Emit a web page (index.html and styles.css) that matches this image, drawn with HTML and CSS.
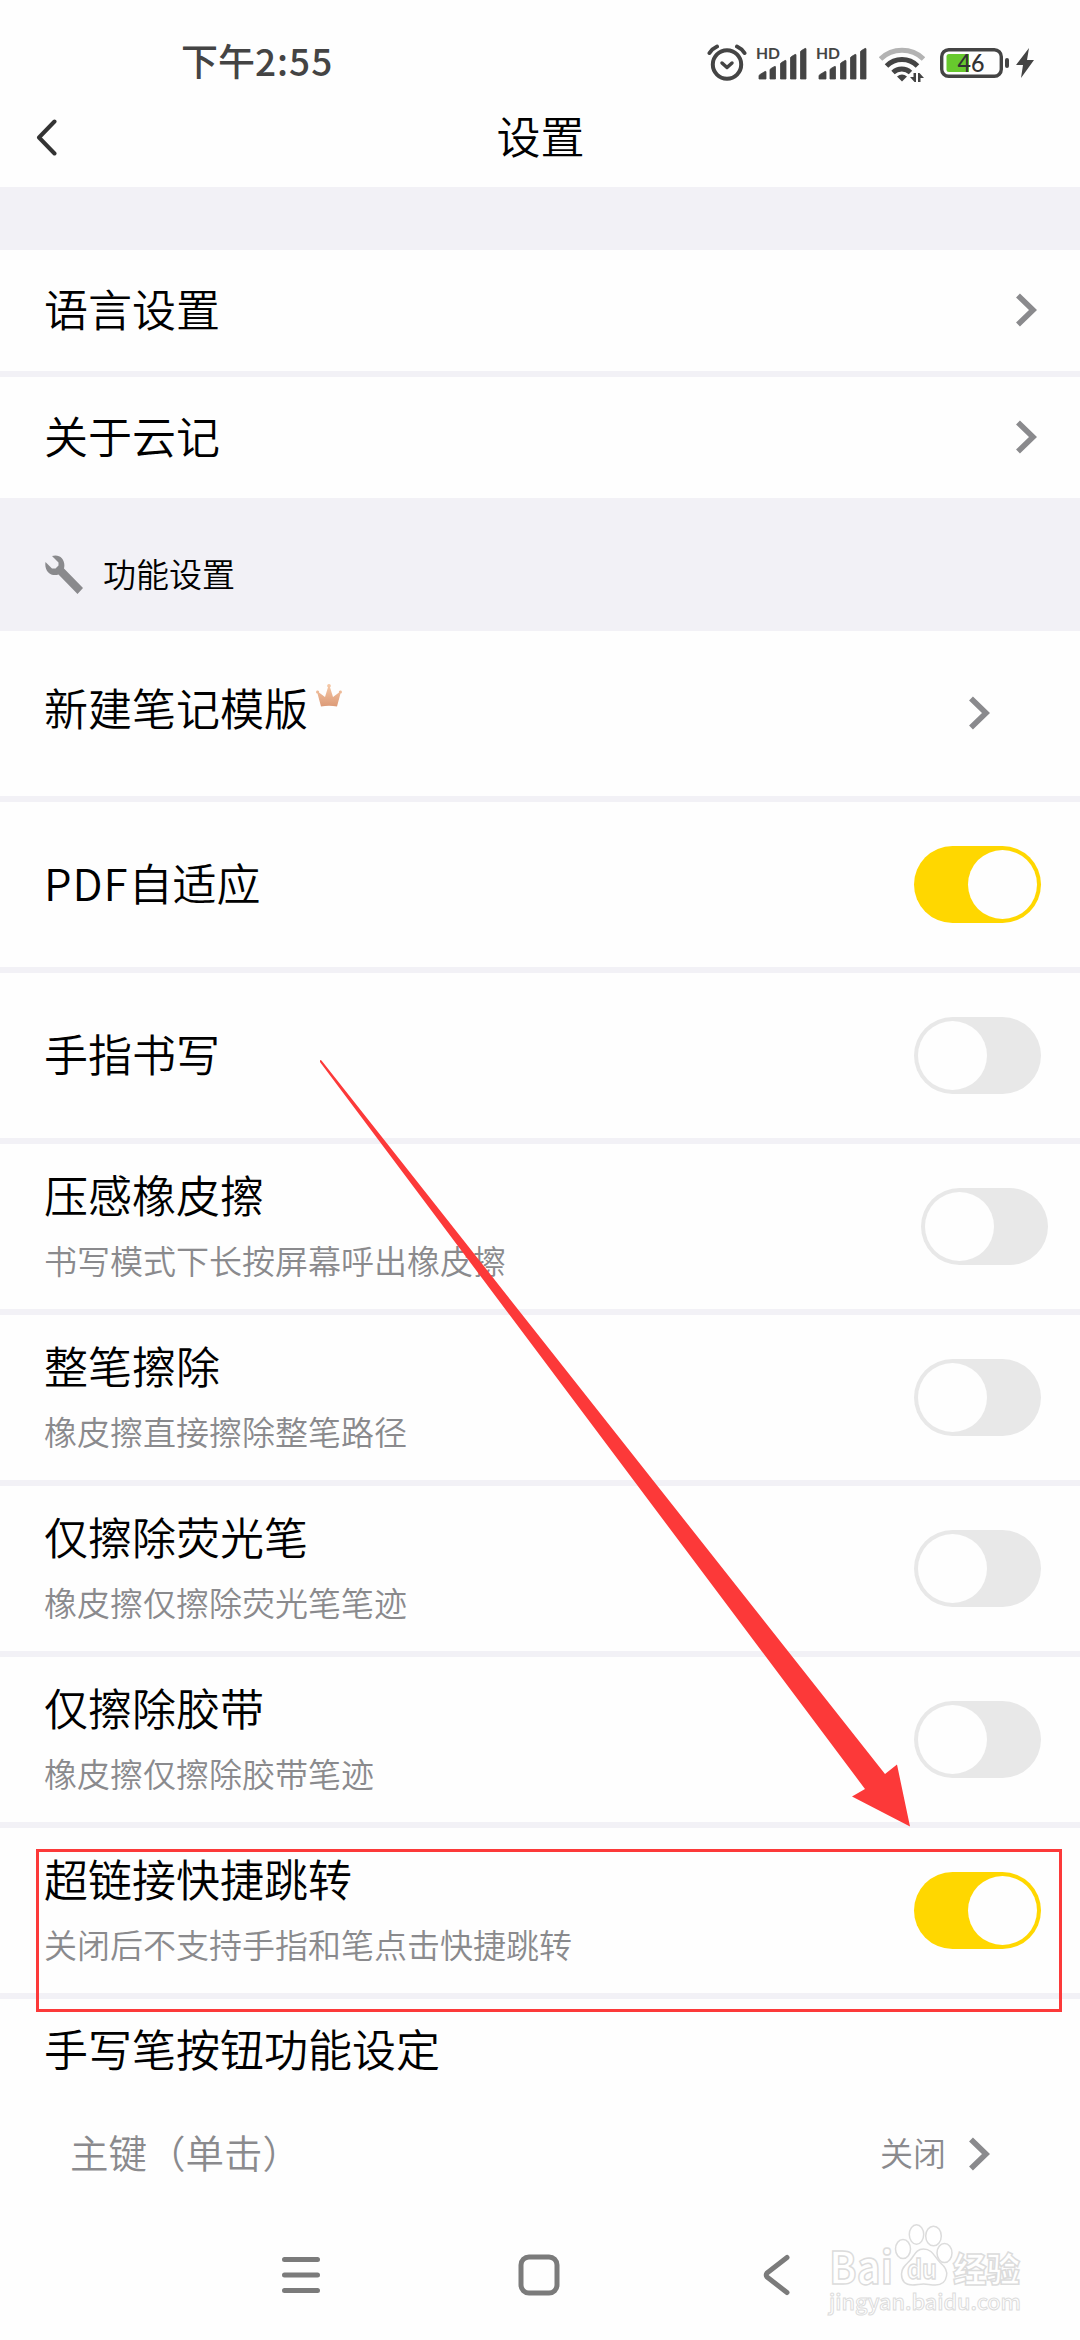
FILE: index.html
```html
<!DOCTYPE html>
<html lang="zh-CN">
  <head>
    <meta charset="UTF-8" />
    <meta name="viewport" content="width=device-width, initial-scale=1.0" />
    <title>设置</title>
    <link rel="stylesheet" href="styles.css">
  </head>
  <body>
    <!-- 公用图标 -->
    <svg class="defs" width="0" height="0">
      <symbol id="arrow" viewBox="0 0 21 34">
        <path d="M2 2.5 L17 17 L2 31.5" fill="none" stroke="#8a8a8d" stroke-width="5.6" />
      </symbol>
      <symbol id="bars" viewBox="0 0 50 34">
        <path d="M2 33v-3q0-1 1-1.500l5-3q1-.5 1 .5v7h-6zM13 33v-9q0-1 1-1.500l3.500-2q1-.5 1 .5v12zM23.500 33v-15q0-1 1-1.500l3.500-2q1-.5 1 .5v18zM33.500 33v-21q0-1 1-1.500l3.500-2q1-.5 1 .5v24zM43.500 33v-27q0-1 1-1.500l3.500-2q1-.5 1 .5v30z" fill="#444" stroke="#444" stroke-width=".8" />
      </symbol>
    </svg>

    <div class="status">
      <span class="time">下午<span class="num">2:55</span></span>
      <div class="status-icons">
        <svg class="alarm" viewBox="0 0 40 38">
          <g fill="none" stroke="#444" stroke-width="4" stroke-linecap="round">
            <circle cx="20" cy="20.500" r="14.200" />
            <path d="M2.500 9 Q5.500 4.500 10 2.500M37.500 9 Q34.500 4.500 30 2.500" />
            <path d="M15 19l5 4.500 5-4.500" stroke-width="3.500" stroke-linejoin="round" />
          </g>
        </svg>
        <svg class="signal" viewBox="0 0 50 34">
          <use href="#bars" />
          <text class="hd" x="-1" y="12.500" textLength="24" lengthAdjust="spacingAndGlyphs">HD</text>
        </svg>
        <svg class="signal" viewBox="0 0 50 34">
          <use href="#bars" />
          <text class="hd" x="-1" y="12.500" textLength="24" lengthAdjust="spacingAndGlyphs">HD</text>
        </svg>
        <svg class="wifi" viewBox="0 0 46 35">
          <g fill="none" stroke-width="5">
            <path d="M1.500 12 A31 31 0 0 1 44.500 12" stroke="#b3b3b3" />
            <path d="M7.500 19 A22 22 0 0 1 38.500 19" stroke="#444" />
            <path d="M14 25.500 A13 13 0 0 1 31.500 25.500" stroke="#444" />
          </g>
          <path d="M18 29.500 Q23 25.500 28 29.500 L23 34.500z" fill="#444" />
          <path d="M31 30h3.500v-4h2.500v9h-1.500zM39 35v-9h1.500l4.500 5h-3.500v4z" fill="#444" />
        </svg>
        <svg class="battery" viewBox="0 0 70 30">
          <rect x="1.700" y="1.700" width="59.600" height="26.600" rx="7" fill="none" stroke="#444" stroke-width="3.400" />
          <rect x="65" y="10" width="4" height="10" rx="2" fill="#444" />
          <path d="M9 6h20v18h-20q-2.500 0-2.500-2.500v-13q0-2.500 2.500-2.500z" fill="#67c92d" />
          <text class="level" x="17.500" y="24" textLength="27" lengthAdjust="spacingAndGlyphs">46</text>
        </svg>
        <svg class="bolt" viewBox="0 0 18 30">
          <path d="M13 0 L0 17h7L5 30 18 12h-7z" fill="#444" />
        </svg>
      </div>
    </div>

    <div class="header">
      <svg class="back" viewBox="0 0 21 37"><path d="M18.500 2.500 L3 18.500 L18.500 34.500" /></svg>
      <h1>设置</h1>
    </div>

    <div class="group">
      <div class="row short">
        <span class="title">语言设置</span>
        <svg class="arrow"><use href="#arrow" /></svg>
      </div>
      <div class="row short">
        <span class="title">关于云记</span>
        <svg class="arrow"><use href="#arrow" /></svg>
      </div>
    </div>

    <div class="section">
      <svg class="wrench" viewBox="0 0 38 40">
        <path d="M7 1 C15-1.500 21 5 19 13.500 L38 33 L32.500 39 L13.500 19.500 C6 22 -1 16 .5 7 L7 13.500 L10.500 13.500 L13.500 10.500 L13.500 7.500z" fill="#8a8a8d" />
      </svg>
      <span>功能设置</span>
    </div>

    <div class="list">
      <div class="row template">
        <div class="vip">
          <span class="title">新建笔记模版</span>
          <svg class="crown" viewBox="0 0 26 24">
            <defs>
              <linearGradient id="gold" x1="0" y1="0" x2="0" y2="1">
                <stop offset="0" stop-color="#f6caa8" />
                <stop offset="1" stop-color="#dc9a77" />
              </linearGradient>
            </defs>
            <path d="M13 1a1.800 1.800 0 0 1 1 3.300L17 14l6-4.500a1.500 1.500 0 1 1 1.500 1L21 23.500Q13 22 5 23.500L1.500 10.500a1.500 1.500 0 1 1 1.500-1L9 14l3-9.700A1.800 1.800 0 0 1 13 1z" fill="url(#gold)" />
          </svg>
        </div>
        <svg class="arrow"><use href="#arrow" /></svg>
      </div>
      <div class="row">
        <span class="title"><span class="latin">PDF</span>自适应</span>
        <div class="switch on"></div>
      </div>
      <div class="row">
        <span class="title">手指书写</span>
        <div class="switch"></div>
      </div>
      <div class="row pressure">
        <div class="text">
          <span class="title">压感橡皮擦</span>
          <span class="desc">书写模式下长按屏幕呼出橡皮擦</span>
        </div>
        <div class="switch"></div>
      </div>
      <div class="row">
        <div class="text">
          <span class="title">整笔擦除</span>
          <span class="desc">橡皮擦直接擦除整笔路径</span>
        </div>
        <div class="switch"></div>
      </div>
      <div class="row">
        <div class="text">
          <span class="title">仅擦除荧光笔</span>
          <span class="desc">橡皮擦仅擦除荧光笔笔迹</span>
        </div>
        <div class="switch"></div>
      </div>
      <div class="row">
        <div class="text">
          <span class="title">仅擦除胶带</span>
          <span class="desc">橡皮擦仅擦除胶带笔迹</span>
        </div>
        <div class="switch"></div>
      </div>
      <div class="row">
        <div class="text">
          <span class="title">超链接快捷跳转</span>
          <span class="desc">关闭后不支持手指和笔点击快捷跳转</span>
        </div>
        <div class="switch on"></div>
      </div>
      <div class="pen">
        <span class="title">手写笔按钮功能设定</span>
        <div class="pen-key">
          <span class="key-name">主键（单击）</span>
          <span class="key-value">关闭</span>
          <svg class="arrow"><use href="#arrow" /></svg>
        </div>
      </div>
    </div>

    <div class="navbar">
      <svg viewBox="0 0 42 42"><path d="M4.500 5.500h33M4.500 21h33M4.500 36.500h33" /></svg>
      <svg viewBox="0 0 42 42"><rect x="3" y="3" width="36" height="36" rx="8" /></svg>
      <svg viewBox="0 0 42 42"><path d="M31 3.500 L11 19 Q9.500 21 11 23 L31 38.500" /></svg>
    </div>

    <!-- 标注：红框和箭头 -->
    <div class="mark-box"></div>
    <svg class="mark-arrow" viewBox="0 0 590 767">
      <path d="M0 0 L1.500 .5 L565 714 L577 704.500 L590 766.500 L532 736.500 L545 729 L0 2z" fill="#fc3939" />
    </svg>

    <!-- 水印 -->
    <svg class="watermark" viewBox="0 0 200 100">
      <g fill="#fff" stroke="#dcdcdc" stroke-width="1.500">
        <text x="3" y="64" font-size="44" font-weight="700" textLength="64" lengthAdjust="spacingAndGlyphs">Bai</text>
        <ellipse cx="77" cy="29" rx="7.500" ry="9.500" />
        <ellipse cx="90.500" cy="14.500" rx="7.200" ry="9.800" />
        <ellipse cx="107.500" cy="16" rx="7.800" ry="9.800" />
        <ellipse cx="118.500" cy="33" rx="7.500" ry="9.500" />
        <path d="M97.500 29c9 0 11 8 17 14 5 4 7 8 6 13-1 6-5 9-11 9-5 0-8-1-12-1s-7 1-11 1c-7 0-11-4-11-11 0-6 4-9 8-13 5-5 6-12 14-12z" />
        <text x="81" y="59" font-size="27" font-weight="700" textLength="30" lengthAdjust="spacingAndGlyphs">du</text>
        <text x="127" y="62" font-size="34" font-weight="900" textLength="67" lengthAdjust="spacingAndGlyphs">经验</text>
        <text x="3" y="90" font-size="22" font-weight="500" stroke-width="1" textLength="192" lengthAdjust="spacingAndGlyphs">jingyan.baidu.com</text>
      </g>
    </svg>
  </body>
</html>
```
FILE: styles.css
```css
* {
  box-sizing: border-box;
}

body {
  position: relative;
  display: flex;
  flex-direction: column;
  width: 1080px;
  height: 2340px;
  margin: 0;
  overflow: hidden;
  background-color: #fefefe;
  color: #000;
  font-family: "Noto Sans CJK SC", sans-serif;
  font-weight: 350;
}

svg {
  display: block;
  flex: none;
}

.defs {
  position: absolute;
}

/* 状态栏 */
.status {
  display: flex;
  justify-content: space-between;
  align-items: center;
  height: 97px;
  padding: 28px 46px 0 181px;
}

.time {
  padding-bottom: 5px;
  color: #444;
  font-size: 37px;
  font-weight: 500;
  line-height: 40px;
}

.num {
  letter-spacing: 1px;
}

.status-icons {
  display: flex;
  align-items: center;
}

.alarm {
  width: 40px;
  height: 38px;
  margin-right: 10px;
}

.signal {
  width: 50px;
  height: 34px;
  margin-right: 10px;
  overflow: visible;
}

.hd {
  fill: #444;
  font-family: Lato, sans-serif;
  font-size: 16px;
  font-weight: 700;
}

.level {
  fill: #333;
  font-family: Lato, sans-serif;
  font-size: 24px;
  font-weight: 500;
}

.wifi {
  width: 46px;
  height: 35px;
  margin: 3px 15px 0 2px;
}

.battery {
  width: 70px;
  height: 30px;
  margin-right: 6px;
}

.bolt {
  width: 18px;
  height: 30px;
}

/* 标题栏 */
.header {
  display: grid;
  grid-template-columns: 36px 1fr 36px;
  align-items: center;
  height: 90px;
  padding: 0 36px 10px;
}

.header h1 {
  margin: 0;
  padding: 0 0 5px 1px;
  font-size: 44px;
  font-weight: 350;
  line-height: 60px;
  text-align: center;
}

.back {
  width: 21px;
  height: 37px;
  fill: none;
  stroke: #333;
  stroke-width: 4;
  stroke-linecap: round;
  stroke-linejoin: round;
}

.group {
  display: flex;
  flex-direction: column;
  gap: 6px;
  padding-top: 63px;
  background-color: #f2f1f6;
}

.list {
  display: flex;
  flex-direction: column;
  gap: 6px;
  background-color: #f2f1f6;
}

.row {
  display: flex;
  justify-content: space-between;
  align-items: center;
  height: 165px;
  padding: 0 39px 0 44px;
  background-color: #fefefe;
}

.row.short {
  height: 121px;
  padding-right: 43px;
}

.row.template {
  padding-right: 90px;
}

.row.pressure {
  padding-right: 32px;
}

.title {
  padding-bottom: 6px;
  font-size: 44px;
  line-height: 60px;
}

.latin {
  letter-spacing: 1px;
}

.text {
  display: flex;
  flex-direction: column;
  gap: 6px;
  padding-bottom: 5px;
}

.desc {
  color: #8a8a8d;
  font-size: 33px;
  line-height: 48px;
}

.vip {
  display: flex;
  gap: 8px;
  padding-bottom: 8px;
}

.crown {
  width: 26px;
  height: 24px;
  margin-top: 6px;
}

.arrow {
  width: 21px;
  height: 34px;
  margin-bottom: 1px;
}

.section {
  display: flex;
  align-items: center;
  gap: 20px;
  height: 133px;
  padding: 20px 45px 0;
  background-color: #f2f1f6;
  font-size: 33px;
}

.section span {
  padding-bottom: 4px;
}

.wrench {
  width: 38px;
  height: 40px;
}

/* 开关 */
.switch {
  display: flex;
  width: 127px;
  height: 77px;
  padding: 4px;
  border-radius: 39px;
  background-color: #e8e8e8;
}

.switch::before {
  content: "";
  width: 69px;
  height: 69px;
  border-radius: 50%;
  background-color: #fefefe;
}

.switch.on {
  justify-content: flex-end;
  background-color: #ffd700;
}

.pen {
  height: 211px;
  padding: 19px 90px 0 44px;
  background-color: #fefefe;
}

.pen .title {
  display: block;
}

.pen-key {
  display: flex;
  align-items: center;
  height: 60px;
  margin-top: 40px;
  padding-left: 26px;
  color: #8a8a8d;
}

.key-name {
  flex: 1;
  padding-bottom: 6px;
  font-size: 38.5px;
}

.key-value {
  margin-right: 23px;
  padding-bottom: 4px;
  font-size: 33px;
}

/* 底部导航 */
.navbar {
  display: flex;
  gap: 196px;
  height: 130px;
  padding: 44px 0 0 280px;
}

.navbar svg {
  width: 42px;
  height: 42px;
  fill: none;
  stroke: #7b7b7b;
  stroke-width: 5;
  stroke-linecap: round;
}

.mark-box {
  position: absolute;
  left: 36px;
  top: 1849px;
  width: 1026px;
  height: 163px;
  border: 3px solid #fc3939;
}

.mark-arrow {
  position: absolute;
  left: 320px;
  top: 1060px;
  width: 590px;
  height: 767px;
}

.watermark {
  position: absolute;
  left: 826px;
  top: 2220px;
  width: 200px;
  height: 100px;
}
```
